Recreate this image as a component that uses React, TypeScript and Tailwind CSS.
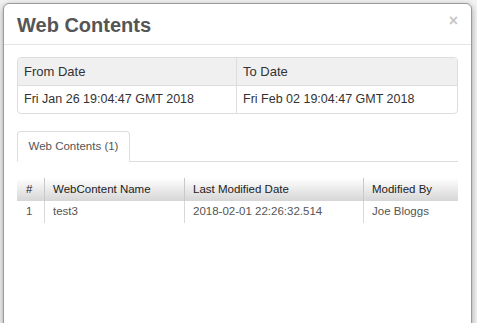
import React from 'react'

const dates = { from: 'Fri Jan 26 19:04:47 GMT 2018', to: 'Fri Feb 02 19:04:47 GMT 2018' }

const rows = [{ id: 1, name: 'test3', modified: '2018-02-01 22:26:32.514', by: 'Joe Bloggs' }]

const App: React.FC = () => {
    return (
        <div className="w-[477px] h-[323px] overflow-hidden bg-[#f2f2f2] pt-[3px] pl-[3px] font-['Liberation_Sans',Arial,sans-serif]">
            <div className="w-[469px] h-[360px] bg-white border border-[#9a9a9a] rounded-[6px] shadow-[0_2px_6px_rgba(0,0,0,0.35)]">
                {/* header */}
                <div className="h-[41px] flex items-center justify-between px-[13px] border-b border-[#e5e5e5]">
                    <h1 className="text-[20px] font-bold text-[#555] leading-none pt-[1px]">Web Contents</h1>
                    <span className="text-[16px] font-bold text-[#c8c8c8] leading-none mt-[-6px]">×</span>
                </div>

                <div className="px-[13px] pt-[12px]">
                    {/* dates */}
                    <div className="border border-[#ddd] rounded-[4px] text-[#333]">
                        <div className="flex h-[28px] bg-[#f0f0f0] border-b border-[#ddd] rounded-t-[4px] text-[13px]">
                            <div className="w-[219px] border-r border-[#ddd] flex items-center px-[6px]">From Date</div>
                            <div className="flex-1 flex items-center px-[6px]">To Date</div>
                        </div>
                        <div className="flex h-[27px] text-[12.5px]">
                            <div className="w-[219px] border-r border-[#ddd] flex items-center px-[6px]">{dates.from}</div>
                            <div className="flex-1 flex items-center px-[6px]">{dates.to}</div>
                        </div>
                    </div>

                    {/* tabs */}
                    <div className="mt-[17px] flex border-b border-[#ddd]">
                        <div className="w-[113px] h-[31px] mb-[-1px] bg-white border border-[#ddd] border-b-white rounded-t-[4px] flex items-center justify-center text-[11.5px] text-[#555]">
                            Web Contents (1)
                        </div>
                    </div>

                    {/* grid */}
                    <div className="mt-[16px] text-[11.5px]">
                        <div className="flex h-[23px] bg-gradient-to-b from-white to-[#d6d6d6] text-[#222]">
                            <div className="w-[28px] flex items-center pl-[9px] border-r border-[#c8c8c8]">#</div>
                            <div className="w-[140px] flex items-center pl-[8px] border-r border-[#c8c8c8]">WebContent Name</div>
                            <div className="w-[179px] flex items-center pl-[8px] border-r border-[#c8c8c8]">Last Modified Date</div>
                            <div className="flex-1 flex items-center pl-[8px]">Modified By</div>
                        </div>
                        {rows.map((r) => (
                            <div key={r.id} className="flex h-[22px] text-[#555]">
                                <div className="w-[28px] flex items-center pl-[9px] border-r border-[#d8d8d8]">{r.id}</div>
                                <div className="w-[140px] flex items-center pl-[8px] border-r border-[#d8d8d8]">{r.name}</div>
                                <div className="w-[179px] flex items-center pl-[8px] border-r border-[#d8d8d8]">{r.modified}</div>
                                <div className="flex-1 flex items-center pl-[8px]">{r.by}</div>
                            </div>
                        ))}
                    </div>
                </div>
            </div>
        </div>
    )
}

export default App
